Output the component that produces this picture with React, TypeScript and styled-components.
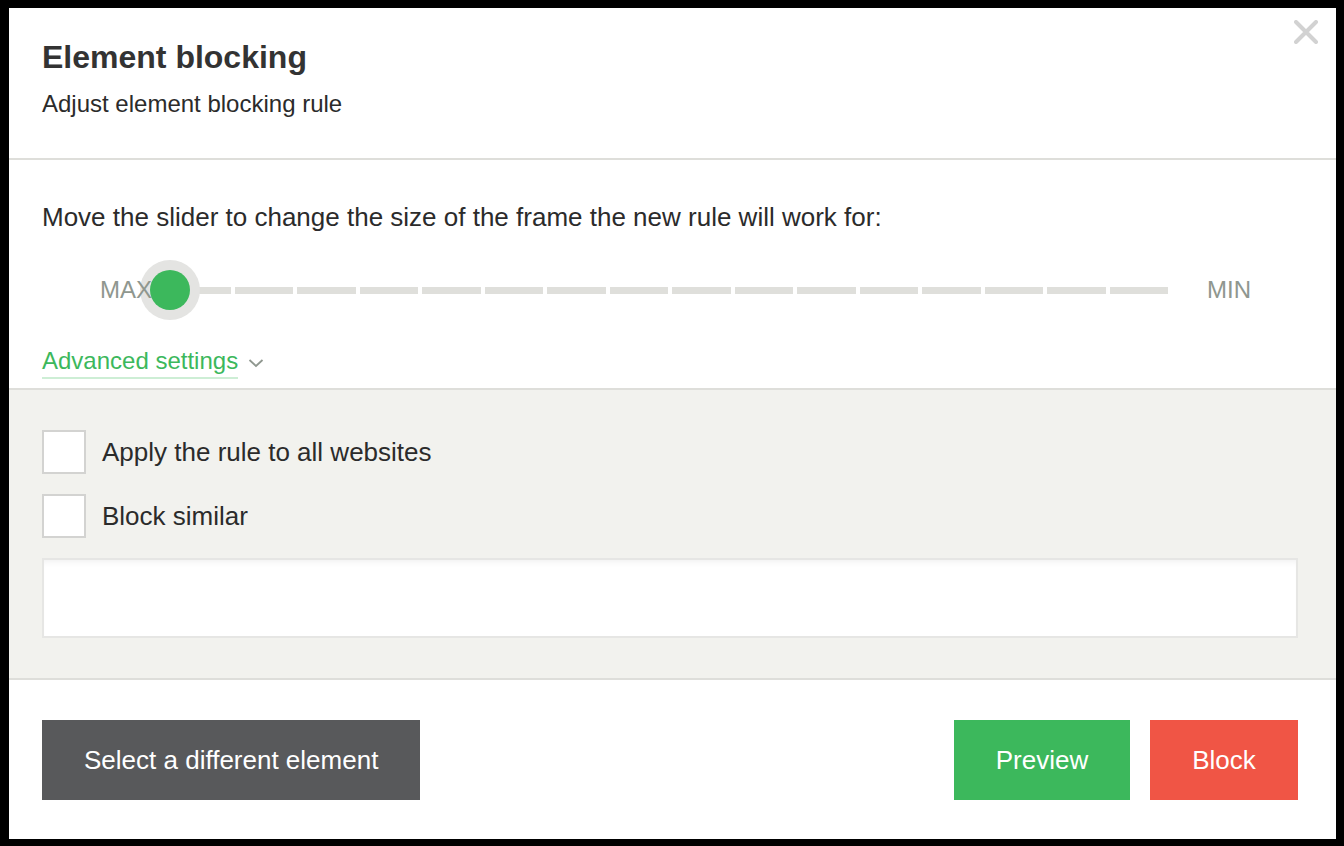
import React, { useState } from 'react';
import styled, { createGlobalStyle } from 'styled-components';

const GlobalStyle = createGlobalStyle`
  html, body {
    margin: 0;
    padding: 0;
    background: #000;
  }
  body {
    font-family: 'Liberation Sans', Arial, Helvetica, sans-serif;
    color: #2b2b2b;
  }
  * {
    box-sizing: border-box;
  }
`;

const SEGMENTS = 16;

export default function App() {
	const [allSites, setAllSites] = useState(false);
	const [similar, setSimilar] = useState(false);

	return (
		<>
			<GlobalStyle />
			<Frame>
				<Dialog>
					<CloseButton aria-label="Close">
						<svg width="24" height="24" viewBox="0 0 24 24">
							<path d="M2 2 L22 22 M22 2 L2 22" stroke="#d2d2d2" strokeWidth="4" strokeLinecap="round" />
						</svg>
					</CloseButton>

					<Header>
						<Title>Element blocking</Title>
						<Subtitle>Adjust element blocking rule</Subtitle>
					</Header>

					<Body>
						<Hint>Move the slider to change the size of the frame the new rule will work for:</Hint>
						<SliderRow>
							<RangeLabel>MAX</RangeLabel>
							<Track>
								{Array.from({ length: SEGMENTS }).map((_, i) => (
									<Segment key={i} />
								))}
								<ThumbHalo />
								<Thumb />
							</Track>
							<RangeLabel>MIN</RangeLabel>
						</SliderRow>
						<AdvancedToggle>
							<AdvancedText>Advanced settings</AdvancedText>
							<svg width="16" height="10" viewBox="0 0 16 10">
								<path d="M1.5 2 L8 8 L14.5 2" fill="none" stroke="#8f978f" strokeWidth="1.8" />
							</svg>
						</AdvancedToggle>
					</Body>

					<Advanced>
						<CheckRow onClick={() => setAllSites(!allSites)}>
							<Box $checked={allSites} />
							<CheckText>Apply the rule to all websites</CheckText>
						</CheckRow>
						<CheckRow onClick={() => setSimilar(!similar)}>
							<Box $checked={similar} />
							<CheckText>Block similar</CheckText>
						</CheckRow>
						<RuleField spellCheck={false} />
					</Advanced>

					<Footer>
						<Button $variant="dark">Select a different element</Button>
						<Actions>
							<Button $variant="green" $width={176}>Preview</Button>
							<Button $variant="red" $width={148}>Block</Button>
						</Actions>
					</Footer>
				</Dialog>
			</Frame>
		</>
	);
}

const Frame = styled.div`
	width: 1344px;
	height: 846px;
	padding: 8px 8px 7px 9px;
`;

const Dialog = styled.div`
	position: relative;
	width: 100%;
	height: 100%;
	background: #fff;
	display: flex;
	flex-direction: column;
`;

const CloseButton = styled.button`
	position: absolute;
	top: 12px;
	right: 18px;
	width: 24px;
	height: 24px;
	padding: 0;
	border: none;
	background: none;
	cursor: pointer;
	display: flex;
`;

const Header = styled.div`
	height: 152px;
	flex-shrink: 0;
	padding: 31px 38px 0 33px;
	border-bottom: 2px solid #dededa;
`;

const Title = styled.h1`
	margin: 0;
	font-size: 32px;
	line-height: 36px;
	font-weight: 700;
	color: #333;
`;

const Subtitle = styled.p`
	margin: 15px 0 0;
	font-size: 24px;
	line-height: 28px;
	color: #2b2b2b;
`;

const Body = styled.div`
	height: 230px;
	flex-shrink: 0;
	padding: 42px 38px 0 33px;
	border-bottom: 2px solid #dededa;
	display: flex;
	flex-direction: column;
	align-items: flex-start;
`;

const Hint = styled.p`
	margin: 0;
	font-size: 26px;
	line-height: 30px;
	color: #2b2b2b;
`;

const SliderRow = styled.div`
	display: flex;
	align-items: center;
	height: 60px;
	margin-top: 28px;
	padding-left: 58px;
`;

const RangeLabel = styled.span`
	position: relative;
	z-index: 1;
	font-size: 24px;
	line-height: 28px;
	color: #8f978f;
`;

const Track = styled.div`
	position: relative;
	display: flex;
	width: 1000px;
	height: 7px;
	margin: 0 39px 0 16px;
`;

const Segment = styled.div`
	flex: 1;
	margin-left: 4px;
	background: #dfdfdb;
`;

const ThumbHalo = styled.div`
	position: absolute;
	left: -28px;
	top: -27px;
	width: 60px;
	height: 60px;
	border-radius: 50%;
	background: #e4e4e2;
	z-index: 0;
`;

const Thumb = styled.div`
	position: absolute;
	left: -18px;
	top: -17px;
	width: 40px;
	height: 40px;
	border-radius: 50%;
	background: #3cb85c;
	z-index: 2;
`;

const AdvancedToggle = styled.div`
	display: flex;
	align-items: center;
	gap: 10px;
	margin-top: 27px;
	cursor: pointer;
`;

const AdvancedText = styled.span`
	font-size: 24px;
	line-height: 28px;
	padding-bottom: 2px;
	color: #3cb85c;
	border-bottom: 2px solid #cdeed5;
`;

const Advanced = styled.div`
	background: #f2f2ee;
	height: 290px;
	flex-shrink: 0;
	padding: 40px 38px 0 33px;
	border-bottom: 2px solid #dededa;
	display: flex;
	flex-direction: column;
	gap: 20px;
`;

const CheckRow = styled.label`
	display: flex;
	align-items: center;
	gap: 16px;
	cursor: pointer;
`;

const Box = styled.span<{ $checked: boolean }>`
	width: 44px;
	height: 44px;
	flex-shrink: 0;
	background: #fff;
	border: 2px solid ${({ $checked }) => ($checked ? '#3cb85c' : '#d3d3d1')};
`;

const CheckText = styled.span`
	font-size: 26px;
	line-height: 30px;
	color: #2b2b2b;
`;

const RuleField = styled.textarea`
	height: 80px;
	border: 2px solid #e6e6e4;
	background: #fff;
	box-shadow: inset 0 6px 6px -4px rgba(0, 0, 0, 0.06);
	resize: none;
	outline: none;
	font-family: 'Liberation Mono', monospace;
	font-size: 16px;
`;

const Footer = styled.div`
	flex: 1;
	padding: 40px 38px 0 33px;
	display: flex;
	align-items: flex-start;
	justify-content: space-between;
`;

const Actions = styled.div`
	display: flex;
	gap: 20px;
`;

const palette = {
	dark: '#58595b',
	green: '#3cb85c',
	red: '#f05545',
};

const Button = styled.button<{ $variant: keyof typeof palette; $width?: number }>`
	height: 80px;
	width: ${({ $width }) => ($width ? `${$width}px` : 'auto')};
	padding: ${({ $width }) => ($width ? '0' : '0 42px')};
	border: none;
	background: ${({ $variant }) => palette[$variant]};
	color: #fff;
	font-family: 'Liberation Sans', Arial, sans-serif;
	font-size: 26px;
	cursor: pointer;
`;
